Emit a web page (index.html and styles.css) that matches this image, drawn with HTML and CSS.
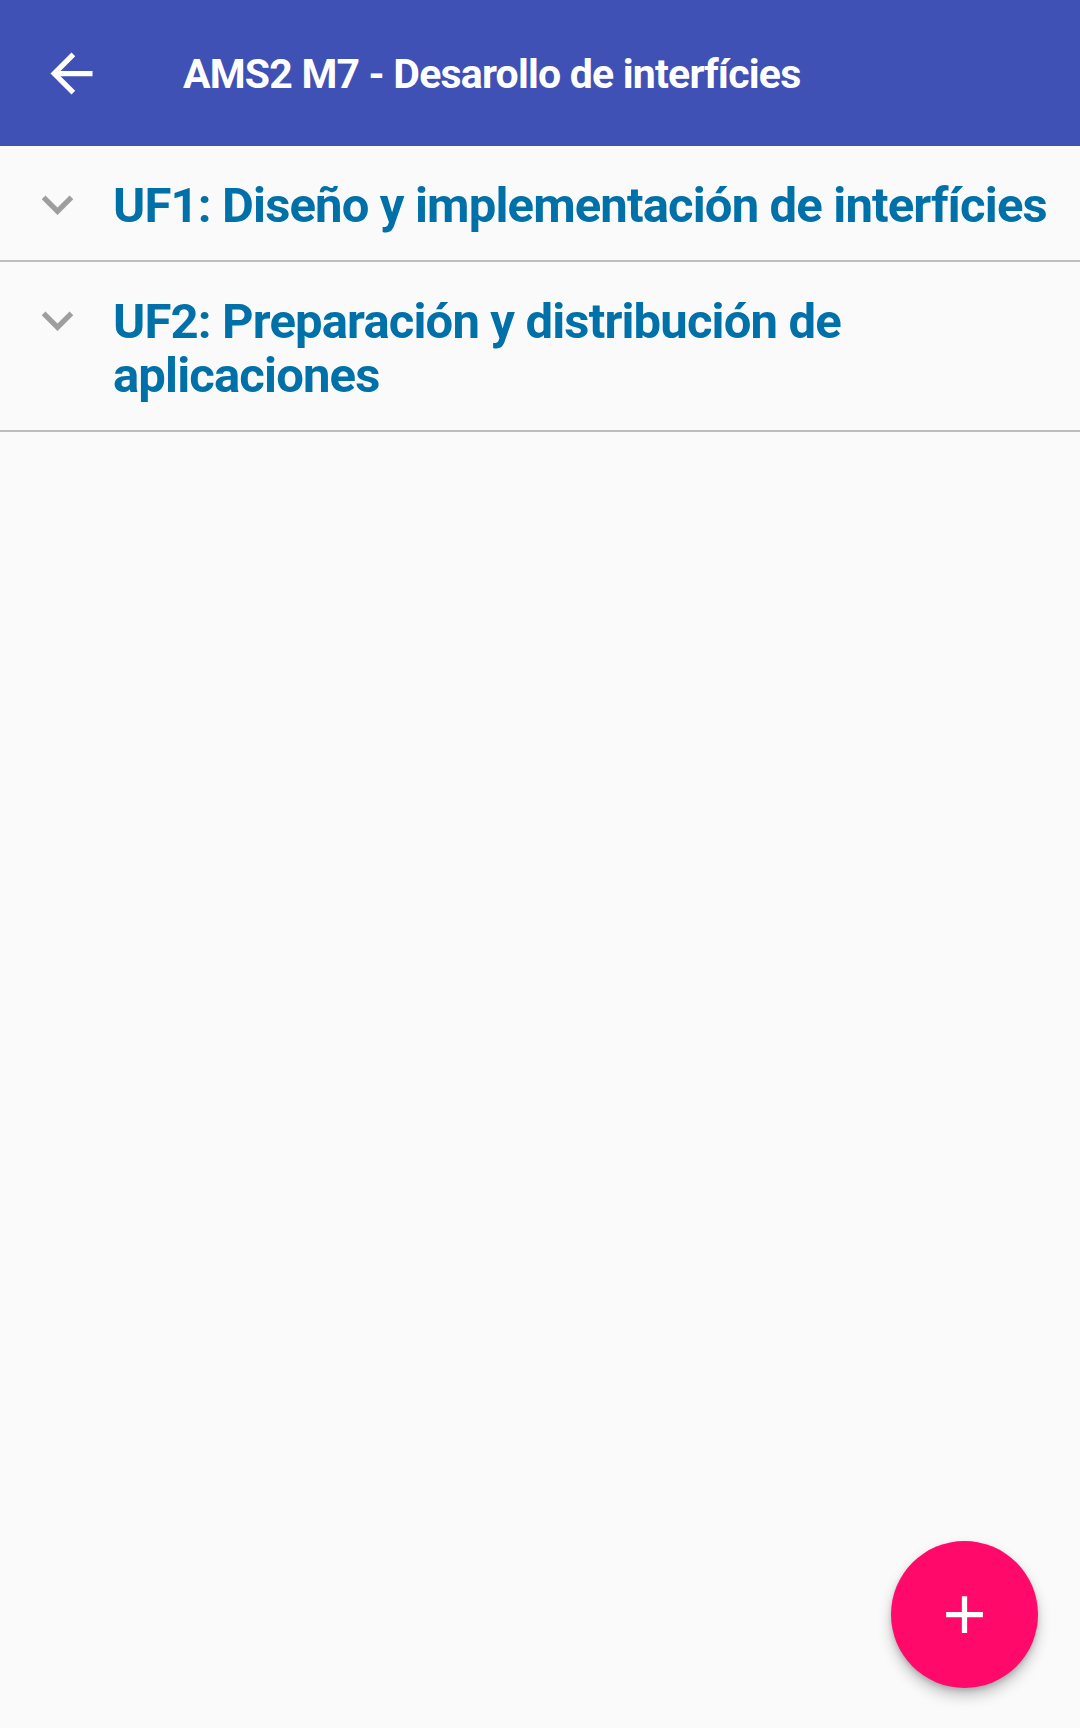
FILE: index.html
```html
<!DOCTYPE html>
<html lang="es">
<head>
<meta charset="utf-8">
<title>AMS2 M7</title>
<link rel="stylesheet" href="styles.css">
</head>
<body>
<header class="appbar">
  <svg class="back" viewBox="0 0 24 24"><path d="M20 11H7.83l5.59-5.59L12 4l-8 8 8 8 1.41-1.41L7.83 13H20v-2z"/></svg>
  <h1 class="title">AMS2 M7 - Desarollo de interfícies</h1>
</header>
<main class="list">
  <div class="row">
    <svg class="chev" viewBox="0 0 24 24"><path d="M16.59 8.59L12 13.17 7.41 8.59 6 10l6 6 6-6z"/></svg>
    <div class="label">UF1: Diseño y implementación de interfícies</div>
  </div>
  <div class="row">
    <svg class="chev" viewBox="0 0 24 24"><path d="M16.59 8.59L12 13.17 7.41 8.59 6 10l6 6 6-6z"/></svg>
    <div class="label">UF2: Preparación y distribución de aplicaciones</div>
  </div>
</main>
<button class="fab" aria-label="Añadir">
  <svg viewBox="0 0 24 24"><path d="M19 13h-6v6h-2v-6H5v-2h6V5h2v6h6v2z"/></svg>
</button>
</body>
</html>
```
FILE: styles.css
```css
html, body {
  margin: 0;
  padding: 0;
  background: #fafafa;
  font-family: Roboto, "Noto Sans", sans-serif;
}
body {
  width: 1080px;
  height: 1728px;
  overflow: hidden;
  position: relative;
}
.appbar {
  height: 146px;
  background: #3f51b5;
  display: flex;
  align-items: center;
}
.back {
  width: 63px;
  height: 63px;
  margin-left: 40px;
  fill: #ffffff;
  flex: none;
}
.title {
  margin: 0 0 0 80px;
  color: #ffffff;
  font-size: 41px;
  font-weight: 700;
  line-height: 48px;
  letter-spacing: -0.8px;
  padding-top: 2px;
}
.list {
  display: flex;
  flex-direction: column;
}
.row {
  display: flex;
  align-items: flex-start;
  border-bottom: 2px solid #bdbdbd;
}
.chev {
  width: 63px;
  height: 63px;
  margin: 27px 0 0 26px;
  fill: #9e9e9e;
  flex: none;
}
.label {
  margin-left: 24px;
  padding: 33px 20px 27px 0;
  color: #0070a8;
  font-size: 49px;
  font-weight: 700;
  line-height: 54px;
  letter-spacing: -0.85px;
}
.fab {
  position: absolute;
  right: 42px;
  bottom: 40px;
  width: 147px;
  height: 147px;
  border-radius: 50%;
  border: none;
  padding: 0;
  background: #ff0a6a;
  box-shadow: 0 8px 14px rgba(0,0,0,0.22), 0 3px 5px rgba(0,0,0,0.15);
  display: flex;
  align-items: center;
  justify-content: center;
}
.fab svg {
  width: 63px;
  height: 63px;
  fill: #ffffff;
}
```
